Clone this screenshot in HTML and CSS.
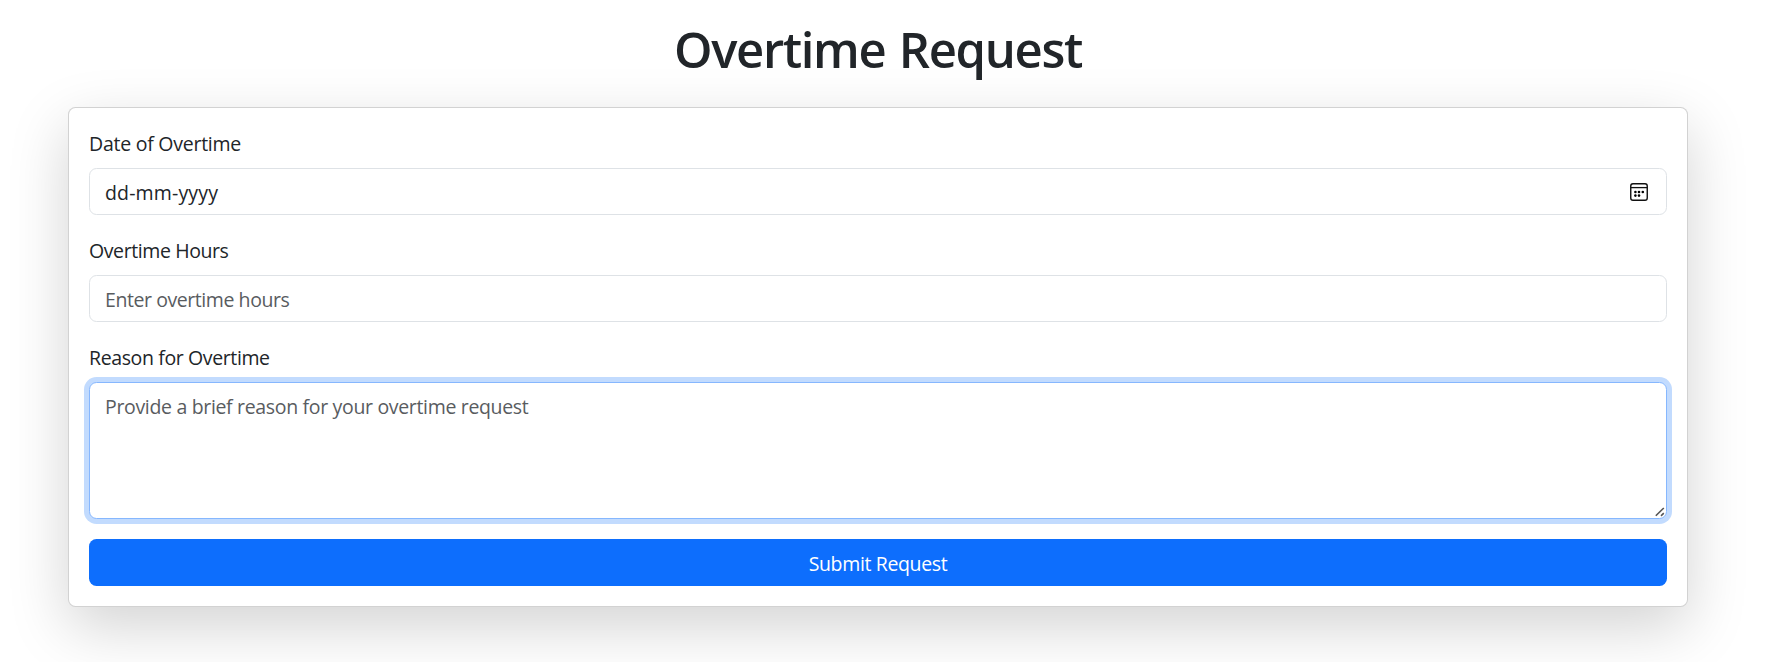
FILE: index.html
```html
<!DOCTYPE html>
<html lang="en">
<head>
<meta charset="utf-8">
<title>Overtime Request</title>
<link rel="stylesheet" href="styles.css">
</head>
<body>
<main class="container">
  <h1 class="title">Overtime Request</h1>
  <form class="card">
    <div class="field">
      <label class="label label-date">Date of Overtime</label>
      <div class="control date">
        <span class="date-text">dd-mm-yyyy</span>
        <svg class="calendar" width="20" height="20" viewBox="0 0 20 20">
          <rect x="1.75" y="1.75" width="16.5" height="16.5" rx="2.2" fill="none" stroke="#111" stroke-width="1.4"/>
          <path d="M1.75 5.6H18.25" stroke="#111" stroke-width="1.3"/>
          <g fill="#000"><circle cx="6.4" cy="10" r="1.3"/><circle cx="10" cy="10" r="1.3"/><circle cx="13.8" cy="10" r="1.3"/><circle cx="6.4" cy="13.6" r="1.3"/><circle cx="10" cy="13.6" r="1.3"/></g>
        </svg>
      </div>
    </div>
    <div class="field">
      <label class="label label-hours" for="hours">Overtime Hours</label>
      <input class="control hours" id="hours" placeholder="Enter overtime hours">
    </div>
    <div class="field reason-field">
      <label class="label label-reason" for="reason">Reason for Overtime</label>
      <textarea class="control reason" id="reason" placeholder="Provide a brief reason for your overtime request"></textarea>
      <svg class="grip" width="10" height="10" viewBox="0 0 10 10"><path d="M.8 8.8L8.8 1M6 8.8L8.8 6.2" fill="none" stroke="#555" stroke-width="1.6"/></svg>
    </div>
    <button class="submit" type="button">Submit Request</button>
  </form>
</main>
</body>
</html>
```
FILE: styles.css
```css
* { box-sizing: border-box; }
body {
  margin: 0;
  height: 662px;
  overflow: hidden;
  background: #fff;
  color: #212529;
  font: 400 19.5px/30px "Open Sans", "Noto Sans", sans-serif;
}
.container { width: 1620px; margin-left: 68px; padding-top: 19px; }
.title {
  margin: 0 0 28px;
  font-size: 49px;
  line-height: 60px;
  font-weight: 600;
  letter-spacing: -1.35px;
  word-spacing: 2px;
  text-align: center;
}
.card {
  height: 500px;
  padding: 20px;
  border: 1px solid rgba(0, 0, 0, .175);
  border-radius: 7.5px;
  background: #fff;
  box-shadow: 0 20px 60px rgba(0, 0, 0, .175);
}
.field { margin-bottom: 20px; }
.label { display: block; height: 30px; margin-bottom: 10px; padding-top: 1px; }
.label-date { letter-spacing: -.25px; }
.label-hours { letter-spacing: -.4px; }
.label-reason { letter-spacing: -.38px; }
.control {
  display: block;
  width: 100%;
  height: 47px;
  padding: 9px 15px 6px;
  border: 1px solid #dee2e6;
  border-radius: 7.5px;
  background: #fff;
  color: #212529;
  font: inherit;
  outline: none;
}
.control::placeholder { color: #595c5f; opacity: 1; }
.date { display: flex; justify-content: space-between; padding-right: 17px; }
.date-text { letter-spacing: .15px; }
.calendar { margin-top: 4px; }
.hours { padding: 8px 15px 7px; letter-spacing: -.43px; }
.reason-field { position: relative; }
.reason {
  height: 137px;
  resize: none;
  letter-spacing: -.33px;
  border-color: #86b7fe;
  box-shadow: 0 0 0 5px rgba(13, 110, 253, .25);
}
.grip { position: absolute; right: 2px; bottom: 2px; }
.submit {
  display: block;
  width: 100%;
  height: 47px;
  padding: 2px 0 0;
  border: 0;
  border-radius: 7.5px;
  background: #0d6efd;
  color: #fff;
  font: inherit;
  letter-spacing: -.36px;
}
```
